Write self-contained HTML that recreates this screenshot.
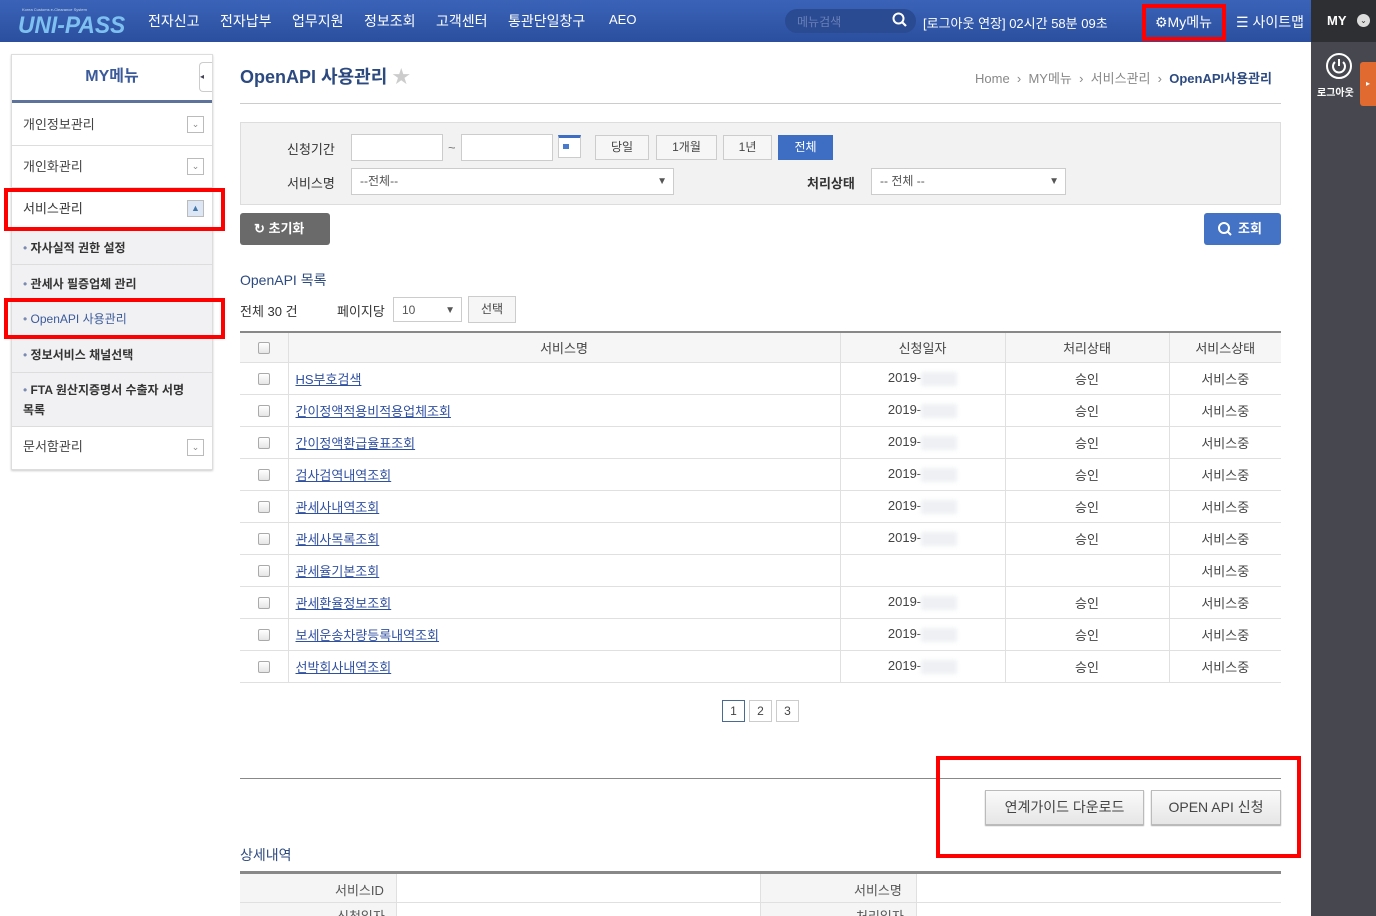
<!DOCTYPE html>
<html style="width:1376px;height:916px;overflow:hidden"><head><meta charset="utf-8"><style>
*{box-sizing:border-box;margin:0;padding:0}
body{width:1376px;height:916px;overflow:hidden;background:#fff;font-family:"Liberation Sans","Noto Sans CJK KR",sans-serif;font-size:13px;color:#333;position:relative}
.a{position:absolute}
.hdr{left:0;top:0;width:1311px;height:42px;background:linear-gradient(#3a63b8,#2b4f9e)}
.nav{top:11px;color:#fff;font-size:14px}
.red{border:4px solid #f00}
.side{left:11px;top:54px;width:202px;height:416px;border:1px solid #ddd;background:#fff;box-shadow:0 1px 2px #ccc}
.it{position:absolute;left:0;width:200px;border-bottom:1px solid #ddd;font-size:13px;color:#444;padding-left:11px}
.tg{position:absolute;right:8px;width:17px;height:17px;border:1px solid #bbb;background:#fff;font-size:9px;text-align:center;line-height:15px;color:#888}
.sub{position:absolute;left:0;width:200px;background:#f1f1f3;border-bottom:1px solid #ddd;font-size:12px;color:#333;padding-left:11px;font-weight:bold}
.sub:before{content:"• ";color:#7a8ab0;font-weight:normal}
.btn{position:absolute;border:1px solid #ccc;background:#f6f6f6;font-size:12px;text-align:center;color:#444}
.inp{position:absolute;border:1px solid #ccc;background:#fff;font-size:12px;color:#555;padding-left:8px}
table{border-collapse:collapse;position:absolute;left:240px;top:331px;width:1041px;border-top:2px solid #888}
td,th{border:1px solid #e0e0e0;height:32px;font-size:13px;font-weight:normal;text-align:center;color:#444}
th{background:#f6f6f6;height:30px}
tr td:first-child,tr th:first-child{border-left:none}
tr td:last-child,tr th:last-child{border-right:none}
td.n{text-align:left;padding-left:7px;color:#3050a0;text-decoration:underline}
.cb{display:inline-block;width:12px;height:12px;border:1px solid #aaa;border-radius:2px;background:linear-gradient(#fff,#e5e5e5);vertical-align:middle}
.bl{display:inline-block;width:36px;height:14px;background:#eef0f4;vertical-align:middle;filter:blur(2px)}
</style></head><body>
<div class="a hdr"></div>
<div class="a" style="left:22px;top:7px;font-size:4px;color:#cde">Korea Customs e-Clearance System</div>
<div class="a" style="left:18px;top:12px;font-size:24px;font-weight:bold;font-style:italic;color:#7ec0f0;letter-spacing:0px;line-height:28px;transform:scaleX(0.95);transform-origin:left">UNI-PASS</div>
<div class="a nav" style="left:148px">전자신고</div>
<div class="a nav" style="left:220px">전자납부</div>
<div class="a nav" style="left:292px">업무지원</div>
<div class="a nav" style="left:364px">정보조회</div>
<div class="a nav" style="left:436px">고객센터</div>
<div class="a nav" style="left:508px">통관단일창구</div>
<div class="a nav" style="left:609px;font-size:13px;top:12px">AEO</div>
<div class="a" style="left:785px;top:9px;width:131px;height:24px;border-radius:12px;background:#2a4a92;color:#6a80b8;font-size:12px;padding:4px 12px">메뉴검색</div>
<svg class="a" style="left:892px;top:12px" width="16" height="16"><circle cx="6.5" cy="6.5" r="5" stroke="#fff" stroke-width="2" fill="none"/><line x1="10" y1="10" x2="14" y2="14" stroke="#fff" stroke-width="2.2"/></svg>
<div class="a" style="left:923px;top:13px;color:#fff;font-size:13px">[로그아웃 연장] 02시간 58분 09초</div>
<div class="a red" style="left:1142px;top:4px;width:84px;height:37px"></div>
<div class="a" style="left:1155px;top:12px;color:#fff;font-size:14px">⚙My메뉴</div>
<div class="a" style="left:1236px;top:12px;color:#fff;font-size:14px">☰ 사이트맵</div>
<div class="a" style="left:1311px;top:0;width:65px;height:916px;background:#46474f"></div>
<div class="a" style="left:1311px;top:0;width:65px;height:42px;background:#2e2f33"></div>
<div class="a" style="left:1327px;top:13px;color:#fff;font-weight:bold;font-size:13px">MY</div>
<div class="a" style="left:1357px;top:14px;width:13px;height:13px;border-radius:50%;background:#ddd;color:#333;font-size:8px;text-align:center;line-height:13px">⌄</div>
<svg class="a" style="left:1325px;top:52px" width="28" height="28"><circle cx="14" cy="14" r="12" stroke="#fff" stroke-width="2" fill="none"/><path d="M10 10a6 6 0 1 0 8 0M14 7v7" stroke="#fff" stroke-width="2" fill="none"/></svg>
<div class="a" style="left:1317px;top:84px;color:#fff;font-size:10px;font-weight:bold">로그아웃</div>
<div class="a" style="left:1360px;top:62px;width:16px;height:44px;background:#e06a30;border-radius:3px 0 0 3px;color:#fff;font-size:8px;line-height:44px;text-align:center">▸</div>

<div class="a side"></div>
<div class="a" style="left:12px;top:55px;width:200px;height:48px;border-bottom:3px solid #5e739b;text-align:center;line-height:44px;font-size:16px;color:#3a5a9a;font-weight:bold">MY메뉴</div>
<div class="a" style="left:199px;top:62px;width:13px;height:30px;border:1px solid #ccc;border-right:none;border-radius:4px 0 0 4px;background:#fff;font-size:8px;line-height:28px;color:#445">◂</div>
<div class="it" style="left:12px;top:104px;height:42px;line-height:42px">개인정보관리<span class="tg" style="top:12px">⌄</span></div>
<div class="it" style="left:12px;top:146px;height:42px;line-height:42px">개인화관리<span class="tg" style="top:12px">⌄</span></div>
<div class="it" style="left:12px;top:188px;height:42px;line-height:42px;color:#333">서비스관리<span class="tg" style="top:12px;background:#dde6f4;color:#47a">▲</span></div>
<div class="sub" style="left:12px;top:230px;height:35px;line-height:37px">자사실적 권한 설정</div>
<div class="sub" style="left:12px;top:265px;height:36px;line-height:38px">관세사 필증업체 관리</div>
<div class="sub" style="left:12px;top:301px;height:36px;line-height:36px;color:#3a5a9a;font-weight:normal">OpenAPI 사용관리</div>
<div class="sub" style="left:12px;top:337px;height:36px;line-height:36px">정보서비스 채널선택</div>
<div class="sub" style="left:12px;top:373px;height:54px;line-height:20px;padding-top:7px;padding-right:24px">FTA 원산지증명서 수출자 서명 목록</div>
<div class="it" style="left:12px;top:427px;height:42px;line-height:40px;border-bottom:none">문서함관리<span class="tg" style="top:12px">⌄</span></div>
<div class="a red" style="left:4px;top:188px;width:221px;height:43px"></div>
<div class="a red" style="left:4px;top:298px;width:221px;height:41px"></div>

<div class="a" style="left:240px;top:63px;font-size:18px;color:#2c4a80;font-weight:bold">OpenAPI 사용관리 <span style="color:#ccc">★</span></div>
<div class="a" style="left:975px;top:68px;font-size:13px;color:#888">Home &nbsp;›&nbsp; MY메뉴 &nbsp;›&nbsp; 서비스관리 &nbsp;›&nbsp; <span style="color:#2c4a80;font-weight:bold">OpenAPI사용관리</span></div>
<div class="a" style="left:240px;top:103px;width:1041px;height:1px;background:#ccc"></div>

<div class="a" style="left:240px;top:122px;width:1041px;height:83px;background:#f2f2f2;border:1px solid #ddd"></div>
<div class="a" style="left:287px;top:139px;font-size:13px;color:#333">신청기간</div>
<div class="inp" style="left:351px;top:134px;width:92px;height:27px"></div>
<div class="a" style="left:448px;top:140px;color:#777">~</div>
<div class="inp" style="left:461px;top:134px;width:92px;height:27px"></div>
<div class="a" style="left:558px;top:135px;width:23px;height:23px;border:1px solid #ccc;border-top:3px solid #3d6ec4;background:#fff"><div style="margin:6px 0 0 4px;width:6px;height:5px;background:#4a7acb"></div></div>
<div class="btn" style="left:595px;top:135px;width:54px;height:25px;line-height:23px">당일</div>
<div class="btn" style="left:656px;top:135px;width:61px;height:25px;line-height:23px">1개월</div>
<div class="btn" style="left:723px;top:135px;width:49px;height:25px;line-height:23px">1년</div>
<div class="btn" style="left:778px;top:135px;width:55px;height:25px;line-height:23px;background:#3d6ec4;border-color:#3d6ec4;color:#fff">전체</div>
<div class="a" style="left:287px;top:173px">서비스명</div>
<div class="inp" style="left:351px;top:168px;width:323px;height:27px;line-height:25px">--전체--<span style="position:absolute;right:6px;font-size:10px">▼</span></div>
<div class="a" style="left:807px;top:173px;font-weight:bold">처리상태</div>
<div class="inp" style="left:871px;top:168px;width:195px;height:27px;line-height:25px">-- 전체 --<span style="position:absolute;right:6px;font-size:10px">▼</span></div>
<div class="a" style="left:240px;top:213px;width:90px;height:32px;background:#6a6a6a;border-radius:3px;color:#fff;font-weight:bold;line-height:32px;padding-left:14px">↻ 초기화</div>
<div class="a" style="left:1204px;top:213px;width:77px;height:32px;background:#4472c4;border-radius:3px;color:#fff;font-weight:bold;line-height:32px;padding-left:34px">조회</div>
<svg class="a" style="left:1217px;top:221px" width="16" height="16"><circle cx="7" cy="7" r="5" stroke="#fff" stroke-width="2" fill="none"/><line x1="10.5" y1="10.5" x2="14" y2="14" stroke="#fff" stroke-width="2"/></svg>

<div class="a" style="left:240px;top:270px;font-size:14px;color:#2c4a80">OpenAPI 목록</div>
<div class="a" style="left:240px;top:301px;font-size:13px">전체 30 건</div>
<div class="a" style="left:337px;top:301px;font-size:13px">페이지당</div>
<div class="inp" style="left:393px;top:297px;width:69px;height:25px;line-height:25px;padding-top:0">10<span style="position:absolute;right:6px;font-size:10px">▼</span></div>
<div class="btn" style="left:468px;top:296px;width:48px;height:27px;line-height:25px">선택</div>

<table>
<tr><th style="width:48px"><span class="cb"></span></th><th style="width:552px">서비스명</th><th style="width:165px">신청일자</th><th style="width:164px">처리상태</th><th>서비스상태</th></tr>
<tr><td><span class="cb"></span></td><td class="n">HS부호검색</td><td>2019-<span class="bl"></span></td><td>승인</td><td>서비스중</td></tr>
<tr><td><span class="cb"></span></td><td class="n">간이정액적용비적용업체조회</td><td>2019-<span class="bl"></span></td><td>승인</td><td>서비스중</td></tr>
<tr><td><span class="cb"></span></td><td class="n">간이정액환급율표조회</td><td>2019-<span class="bl"></span></td><td>승인</td><td>서비스중</td></tr>
<tr><td><span class="cb"></span></td><td class="n">검사검역내역조회</td><td>2019-<span class="bl"></span></td><td>승인</td><td>서비스중</td></tr>
<tr><td><span class="cb"></span></td><td class="n">관세사내역조회</td><td>2019-<span class="bl"></span></td><td>승인</td><td>서비스중</td></tr>
<tr><td><span class="cb"></span></td><td class="n">관세사목록조회</td><td>2019-<span class="bl"></span></td><td>승인</td><td>서비스중</td></tr>
<tr><td><span class="cb"></span></td><td class="n">관세율기본조회</td><td></td><td></td><td>서비스중</td></tr>
<tr><td><span class="cb"></span></td><td class="n">관세환율정보조회</td><td>2019-<span class="bl"></span></td><td>승인</td><td>서비스중</td></tr>
<tr><td><span class="cb"></span></td><td class="n">보세운송차량등록내역조회</td><td>2019-<span class="bl"></span></td><td>승인</td><td>서비스중</td></tr>
<tr><td><span class="cb"></span></td><td class="n">선박회사내역조회</td><td>2019-<span class="bl"></span></td><td>승인</td><td>서비스중</td></tr>
</table>

<div class="btn" style="left:722px;top:700px;width:23px;height:22px;line-height:20px;border-color:#4a6a90;background:#fff">1</div>
<div class="btn" style="left:749px;top:700px;width:23px;height:22px;line-height:20px;background:#fff">2</div>
<div class="btn" style="left:776px;top:700px;width:23px;height:22px;line-height:20px;background:#fff">3</div>

<div class="a" style="left:240px;top:778px;width:1041px;height:1px;background:#888"></div>
<div class="btn" style="left:985px;top:790px;width:159px;height:35px;line-height:33px;font-size:14px;background:linear-gradient(#fafafa,#e6e6e6);border-color:#bbb;box-shadow:0 1px 1px #aaa">연계가이드 다운로드</div>
<div class="btn" style="left:1151px;top:790px;width:130px;height:35px;line-height:33px;font-size:14px;background:linear-gradient(#fafafa,#e6e6e6);border-color:#bbb;box-shadow:0 1px 1px #aaa">OPEN API 신청</div>
<div class="a red" style="left:936px;top:756px;width:365px;height:102px"></div>

<div class="a" style="left:240px;top:845px;font-size:14px;color:#2c4a80">상세내역</div>
<div class="a" style="left:240px;top:871px;width:1041px;height:3px;background:#888"></div>
<div class="a" style="left:240px;top:874px;width:157px;height:42px;background:#f5f5f5;border-right:1px solid #e0e0e0"></div>
<div class="a" style="left:760px;top:874px;width:157px;height:42px;background:#f5f5f5;border-left:1px solid #e0e0e0;border-right:1px solid #e0e0e0"></div>
<div class="a" style="left:240px;top:902px;width:1041px;height:1px;background:#e0e0e0"></div>
<div class="a" style="left:335px;top:880px;color:#555">서비스ID</div>
<div class="a" style="left:854px;top:880px;color:#555">서비스명</div>
<div class="a" style="left:337px;top:906px;color:#555;height:10px;overflow:hidden">신청일자</div>
<div class="a" style="left:856px;top:906px;color:#555;height:10px;overflow:hidden">처리일자</div>
</body></html>
